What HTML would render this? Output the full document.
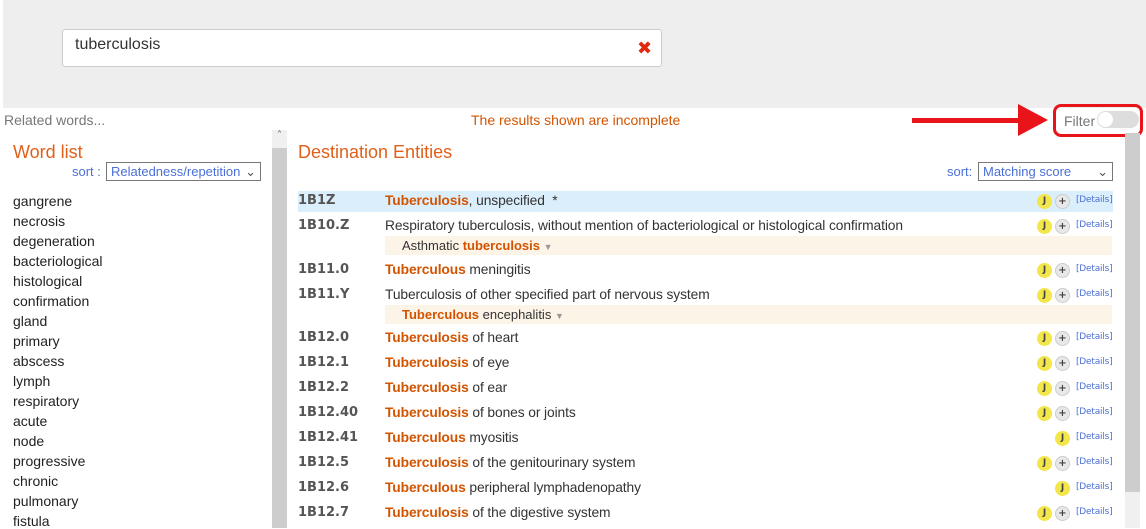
<!DOCTYPE html>
<html><head><style>
*{margin:0;padding:0;box-sizing:border-box}
body{width:1146px;height:528px;overflow:hidden;background:#fff;font-family:"DejaVu Sans","Liberation Sans",sans-serif;position:relative;color:#333}
.a{position:absolute}
.t{font-family:"Liberation Sans",sans-serif;font-size:14px;white-space:nowrap}
.o{color:#d35400;font-weight:bold}
.code{position:absolute;left:298px;font-family:"DejaVu Sans",sans-serif;font-weight:bold;font-size:13px;color:#555;line-height:18px}
.tx{position:absolute;left:385px;line-height:18px;font-size:13.8px;letter-spacing:-0.1px}
.sub{position:absolute;left:385px;width:727px;height:19px;background:#fdf4e8;padding-left:17px;font-size:13px;line-height:19px}
.j{position:absolute;width:15px;height:15px;border-radius:50%;background:#f2e64a;font:bold 9px "DejaVu Sans",sans-serif;text-align:center;line-height:15px;color:#444}
.p{position:absolute;width:15px;height:15px;border-radius:50%;background:#e8e8e8;border:1px solid #ccc;font:bold 10px "DejaVu Sans",sans-serif;text-align:center;line-height:13px;color:#444}
.d{position:absolute;font-family:"DejaVu Sans",sans-serif;color:#4a6fd8;font-size:9px;line-height:15px;letter-spacing:-0.2px}
.w{position:absolute;left:13px;font-size:14px;color:#222}
</style></head><body>
<div class="a" style="left:3px;top:0;width:1143px;height:108px;background:#eeeeee"></div>
<div class="a" style="left:62px;top:29px;width:600px;height:38px;background:#fff;border:1px solid #ccc;border-radius:3px"></div>
<div class="a t" style="left:75px;top:36px;font-size:16px;color:#333">tuberculosis</div>
<div class="a" style="left:637px;top:38px;font:bold 18px 'DejaVu Sans',sans-serif;color:#e02a10">✖</div>
<div class="a t" style="left:4px;top:112px;color:#777">Related words...</div>
<div class="a t" style="left:471px;top:112px;color:#d35400">The results shown are incomplete</div>
<div class="a" style="left:912px;top:118px;width:110px;height:5px;background:#e8141a"></div>
<svg class="a" style="left:1018px;top:104px" width="30" height="32"><polygon points="0,0 30,16 0,32" fill="#e8141a"/></svg>
<div class="a" style="left:1053px;top:104px;width:90px;height:33px;border:3px solid #e8141a;border-radius:8px"></div>
<div class="a t" style="left:1064px;top:113px;color:#777">Filter</div>
<div class="a" style="left:1097px;top:111px;width:42px;height:17px;border-radius:9px;background:#ddd"></div>
<div class="a" style="left:1098px;top:112px;width:15px;height:15px;border-radius:50%;background:#fff"></div>
<div class="a t" style="left:13px;top:142px;font-size:18px;color:#e0601a">Word list</div>
<div class="a t" style="left:72px;top:164px;font-size:13px;color:#4a6fd8">sort :</div>
<div class="a t" style="left:106px;top:162px;width:155px;height:19px;border:1px solid #777;font-size:13px;color:#4a6fd8;padding-left:4px;line-height:17px">Relatedness/repetition<span style="position:absolute;right:4px;color:#555">⌄</span></div>
<div class="a" style="left:272px;top:130px;width:15px;height:398px;background:#cdcdcd"></div>
<div class="a" style="left:272px;top:130px;width:15px;height:18px;background:#f0f0f0;font-size:10px;text-align:center;color:#555">˄</div>
<div class="t">
<div class="w" style="top:193px">gangrene</div><div class="w" style="top:213px">necrosis</div><div class="w" style="top:233px">degeneration</div><div class="w" style="top:253px">bacteriological</div><div class="w" style="top:273px">histological</div><div class="w" style="top:293px">confirmation</div><div class="w" style="top:313px">gland</div><div class="w" style="top:333px">primary</div><div class="w" style="top:353px">abscess</div><div class="w" style="top:373px">lymph</div><div class="w" style="top:393px">respiratory</div><div class="w" style="top:413px">acute</div><div class="w" style="top:433px">node</div><div class="w" style="top:453px">progressive</div><div class="w" style="top:473px">chronic</div><div class="w" style="top:493px">pulmonary</div><div class="w" style="top:513px">fistula</div>
</div>
<div class="a t" style="left:298px;top:142px;font-size:18px;color:#e0601a">Destination Entities</div>
<div class="a t" style="left:947px;top:164px;font-size:13px;color:#4a6fd8">sort:</div>
<div class="a t" style="left:978px;top:162px;width:135px;height:19px;border:1px solid #777;font-size:13px;color:#4a6fd8;padding-left:4px;line-height:17px">Matching score<span style="position:absolute;right:4px;color:#555">⌄</span></div>
<div class="a" style="left:1125px;top:133px;width:15px;height:359px;background:#cdcdcd"></div>
<div class="a" style="left:1125px;top:492px;width:15px;height:36px;background:#f0f0f0"></div>
<div class="a" style="left:298px;top:191px;width:815px;height:21px;background:#dbeefb"></div>
<div class="sub t" style="top:236px">Asthmatic <span class="o">tuberculosis</span> <span style="color:#999;font-size:9px">▼</span></div>
<div class="sub t" style="top:305px"><span class="o">Tuberculous</span> encephalitis <span style="color:#999;font-size:9px">▼</span></div>
<div class="t" id="rows"></div>
<script>
var r=[["1B1Z",201,'<span class="o">Tuberculosis</span>, unspecified &nbsp;*',1],
["1B10.Z",226,'Respiratory tuberculosis, without mention of bacteriological or histological confirmation',1],
["1B11.0",270,'<span class="o">Tuberculous</span> meningitis',1],
["1B11.Y",295,'Tuberculosis of other specified part of nervous system',1],
["1B12.0",338,'<span class="o">Tuberculosis</span> of heart',1],
["1B12.1",363,'<span class="o">Tuberculosis</span> of eye',1],
["1B12.2",388,'<span class="o">Tuberculosis</span> of ear',1],
["1B12.40",413,'<span class="o">Tuberculosis</span> of bones or joints',1],
["1B12.41",438,'<span class="o">Tuberculous</span> myositis',0],
["1B12.5",463,'<span class="o">Tuberculosis</span> of the genitourinary system',1],
["1B12.6",488,'<span class="o">Tuberculous</span> peripheral lymphadenopathy',0],
["1B12.7",513,'<span class="o">Tuberculosis</span> of the digestive system',1]];
var h='';r.forEach(function(x){var y=x[1];
h+='<div class="code" style="top:'+(y-9)+'px">'+x[0]+'</div><div class="tx" style="top:'+(y-9)+'px">'+x[2]+'</div>';
if(x[3]){h+='<div class="j" style="left:1037px;top:'+(y-7)+'px">J</div><div class="p" style="left:1055px;top:'+(y-7)+'px">+</div>';}
else h+='<div class="j" style="left:1055px;top:'+(y-7)+'px">J</div>';
h+='<div class="d" style="left:1076px;top:'+(y-8)+'px">[Details]</div>';});
document.getElementById('rows').innerHTML=h;
</script>
</body></html>
